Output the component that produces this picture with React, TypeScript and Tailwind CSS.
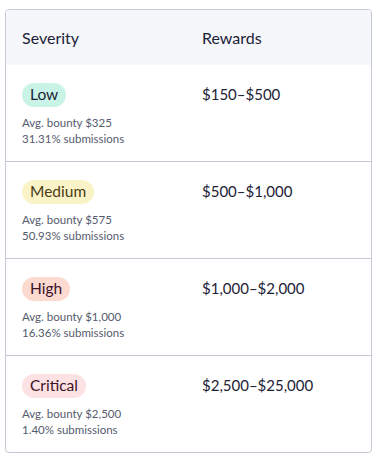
import React from "react";

const rows = [
  { name: "Low", bg: "bg-[#c9f3e7]", fg: "text-[#1c2236]", avg: "$325", pct: "31.31%", reward: "$150–$500" },
  { name: "Medium", bg: "bg-[#fbf3c8]", fg: "text-[#4a3b12]", avg: "$575", pct: "50.93%", reward: "$500–$1,000" },
  { name: "High", bg: "bg-[#fcdad0]", fg: "text-[#3d1228]", avg: "$1,000", pct: "16.36%", reward: "$1,000–$2,000" },
  { name: "Critical", bg: "bg-[#fde2e4]", fg: "text-[#3d1228]", avg: "$2,500", pct: "1.40%", reward: "$2,500–$25,000" },
];

export default function App() {
  return (
    <div className="pl-[5px] pt-[9px] bg-white min-h-[459px]" style={{ fontFamily: "Lato, 'Noto Sans', sans-serif" }}>
      <div className="w-[367px] border border-[#c5c9d4] rounded-[4px] overflow-hidden text-[#1c2236]">
        <div className="h-[55px] bg-[#f6f7fb] grid grid-cols-[196px_1fr] items-center text-[16px]">
          <div className="pl-4">Severity</div>
          <div>Rewards</div>
        </div>
        {rows.map((r, i) => (
          <div
            key={r.name}
            className={`grid grid-cols-[196px_1fr] pt-[17px] ${i > 0 ? "h-[97px] border-t border-[#c5c9d4]" : "h-[96px]"}`}
          >
            <div className="pl-4">
              <span className={`inline-flex items-center h-[24px] px-2 rounded-full text-[15.5px] ${r.bg} ${r.fg}`}>{r.name}</span>
              <div className="mt-[8px] text-[11.5px] leading-[16px] text-[#555b6e]">
                <div>Avg. bounty {r.avg}</div>
                <div>{r.pct} submissions</div>
              </div>
            </div>
            <div className="text-[15px] leading-[24px]">{r.reward}</div>
          </div>
        ))}
      </div>
    </div>
  );
}
